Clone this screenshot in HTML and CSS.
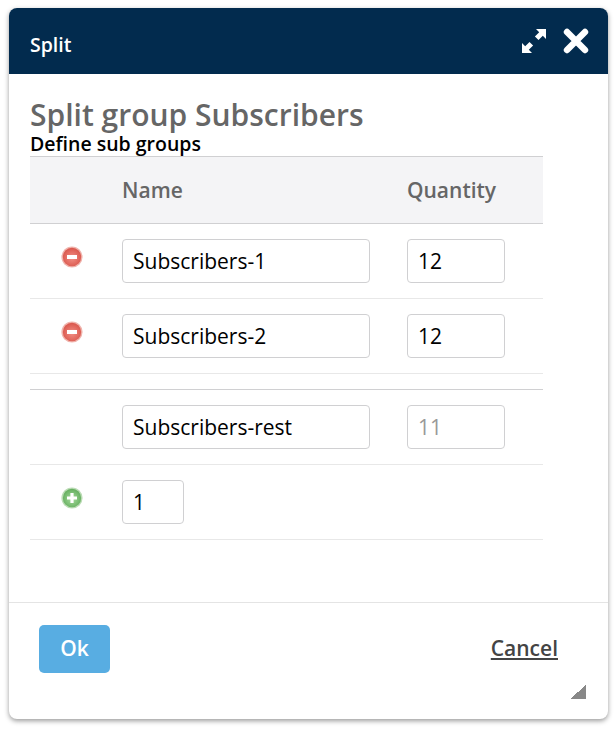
FILE: index.html
```html
<!DOCTYPE html>
<html lang="en">
<head>
<meta charset="utf-8">
<title>Split</title>
<link rel="stylesheet" href="styles.css">
</head>
<body>
<div class="dialog">
  <header class="titlebar">
    <span class="titlebar-text">Split</span>
    <div class="titlebar-icons">
      <svg class="icon-expand" width="26" height="26" viewBox="0 0 26 26"><path fill="#fff" d="M25 1v10l-3.2-3.2-4.3 4.3-3.6-3.6 4.3-4.3L15 1zM1 25V15l3.2 3.2 4.3-4.3 3.6 3.6-4.3 4.3L11 25z"/></svg>
      <svg class="icon-close" width="26" height="26" viewBox="0 0 26 26"><path stroke="#fff" stroke-width="6.4" stroke-linecap="round" d="M4 4l18 18M22 4L4 22"/></svg>
    </div>
  </header>
  <main class="content">
    <h1 class="title">Split group Subscribers</h1>
    <h2 class="subtitle">Define sub groups</h2>
    <table class="groups">
      <thead>
        <tr><th class="col-action"></th><th class="col-name">Name</th><th class="col-qty">Quantity</th></tr>
      </thead>
      <tbody>
        <tr>
          <td class="cell-action"><svg class="round-icon" width="22" height="22" viewBox="0 0 22 22"><use href="#minus"/></svg></td>
          <td><input class="field field-name" value="Subscribers-1"></td>
          <td><input class="field field-qty" value="12"></td>
        </tr>
        <tr>
          <td class="cell-action"><svg class="round-icon" width="22" height="22" viewBox="0 0 22 22"><use href="#minus"/></svg></td>
          <td><input class="field field-name" value="Subscribers-2"></td>
          <td><input class="field field-qty" value="12"></td>
        </tr>
        <tr class="spacer"><td colspan="3"></td></tr>
        <tr>
          <td></td>
          <td><input class="field field-name" value="Subscribers-rest"></td>
          <td><input class="field field-qty" value="11" disabled></td>
        </tr>
        <tr>
          <td class="cell-action"><svg class="round-icon" width="22" height="22" viewBox="0 0 22 22"><use href="#plus"/></svg></td>
          <td><input class="field field-count" value="1"></td>
          <td></td>
        </tr>
      </tbody>
    </table>
  </main>
  <footer class="actions">
    <button class="ok" type="button">Ok</button>
    <a class="cancel" href="#">Cancel</a>
  </footer>
  <div class="resize-grip"></div>
</div>
<svg class="defs" width="0" height="0">
  <defs>
    <radialGradient id="red" cx="50%" cy="55%" r="55%"><stop offset="0" stop-color="#f28f85"/><stop offset="1" stop-color="#d9564c"/></radialGradient>
    <radialGradient id="green" cx="50%" cy="55%" r="55%"><stop offset="0" stop-color="#a8dc9e"/><stop offset="1" stop-color="#63ad5d"/></radialGradient>
    <g id="minus">
      <circle cx="11" cy="11" r="10.6" fill="#f0b4ad"/>
      <circle cx="11" cy="11" r="9.2" fill="url(#red)"/>
      <rect x="6" y="9" width="10" height="4" fill="#fff"/>
    </g>
    <g id="plus">
      <circle cx="11" cy="11" r="10.6" fill="#bcdcb6"/>
      <circle cx="11" cy="11" r="9.2" fill="url(#green)"/>
      <path fill="#fff" d="M9.4 6h3.2v3.4H16v3.2h-3.4V16H9.4v-3.4H6V9.4h3.4z"/>
    </g>
  </defs>
</svg>
</body>
</html>
```
FILE: styles.css
```css
* { box-sizing: border-box; }
html, body { margin: 0; padding: 0; background: #fff; }
body {
  padding: 8px 8px 12px 9px;
  font-family: "Open Sans", sans-serif;
  color: #000;
}
.defs { position: absolute; }
.dialog {
  position: relative;
  width: 599px;
  height: 711px;
  display: flex;
  flex-direction: column;
  background: #fff;
  border-radius: 8px;
  box-shadow: 0 2px 5px rgba(0, 0, 0, .4);
}
.titlebar {
  height: 66px;
  flex: none;
  display: flex;
  align-items: center;
  justify-content: space-between;
  padding: 0 19px 0 21px;
  background: #022b4e;
  border-radius: 8px 8px 0 0;
  color: #fff;
}
.titlebar-text { font-size: 19.5px; font-weight: 600; margin-top: 6px; }
.titlebar-icons { display: flex; gap: 16px; align-items: center; margin-top: -1px; }
.content { flex: 1; padding: 22px 21px 0; }
.title {
  margin: 0;
  font-size: 30px;
  line-height: 38px;
  font-weight: 600;
  color: #666;
}
.subtitle {
  margin: 0;
  font-size: 19.5px;
  line-height: 20px;
  font-weight: 600;
  color: #000;
}
.groups {
  width: 513px;
  border-collapse: collapse;
  table-layout: fixed;
  margin-top: 2px;
}
.groups th {
  height: 67px;
  padding: 0;
  text-align: left;
  font-size: 21px;
  font-weight: 600;
  color: #666;
  background: #f4f4f6;
  border-top: 1px solid #d0d0d2;
  border-bottom: 1px solid #d0d0d2;
}
.col-action { width: 92px; }
.col-name { width: 285px; }
.groups td {
  height: 75px;
  padding: 0;
  border-bottom: 1px solid #e8e8e8;
  vertical-align: middle;
}
.cell-action { padding-left: 31px !important; }
.round-icon { display: block; margin-top: -8px; }
.groups .spacer td { height: 16px; border-bottom-color: #d0d0d2; }
.field {
  display: block;
  height: 44px;
  padding: 0 10px;
  font-family: inherit;
  font-size: 21px;
  color: #000;
  background: #fff;
  border: 1px solid #d0d0d2;
  border-radius: 4px;
  outline: none;
}
.field-name { width: 248px; }
.field-qty { width: 98px; }
.field-count { width: 62px; }
.field:disabled { color: #999; background: #fff; }
.actions {
  flex: none;
  height: 117px;
  display: flex;
  align-items: flex-start;
  justify-content: space-between;
  padding: 22px 50px 0 30px;
  border-top: 1px solid #e4e4e4;
}
.ok {
  width: 71px;
  height: 48px;
  padding: 0 0 2px;
  font-family: inherit;
  font-size: 21px;
  font-weight: 600;
  color: #fff;
  background: #58ade2;
  border: none;
  border-radius: 5px;
}
.cancel {
  margin-top: 9px;
  font-size: 21px;
  font-weight: 600;
  line-height: 28px;
  color: #444;
}
.resize-grip {
  position: absolute;
  right: 22px;
  bottom: 20px;
  width: 16px;
  height: 14px;
  background: linear-gradient(to bottom right, transparent 50%, #888 50%);
}
```
